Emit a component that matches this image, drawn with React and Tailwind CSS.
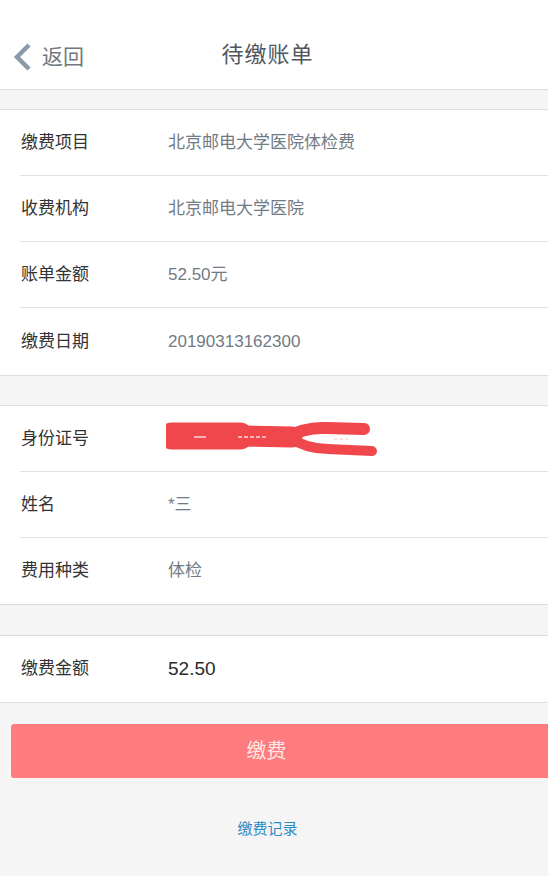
const font = {
  fontFamily: '"Liberation Sans", "Noto Sans CJK SC", sans-serif',
};

const Row = ({ label, children, last, tall }) => (
  <div className="pl-[20px] bg-white">
    <div
      className={`flex items-center ${tall ? "h-[67px]" : "h-[66px]"} ${
        last ? "" : "border-b border-[#e3e3e3]"
      }`}
    >
      <div className="w-[148px] pl-px text-[17px] text-[#333]">{label}</div>
      <div className="flex-1 text-[17px] text-[#717b85]">{children}</div>
    </div>
  </div>
);

const Section = ({ children }) => (
  <div className="bg-white border-y border-[#dedede]">{children}</div>
);

const Redaction = () => (
  <svg width="215" height="36" viewBox="0 0 215 36" className="-ml-[2px]">
    <g stroke="#f0474d" strokeLinecap="round" fill="none">
      <path d="M6 15 L74 15" strokeWidth="27" />
      <path d="M72 15 L126 16" strokeWidth="21" />
      <path d="M120 17 Q138 6 160 7 L198 8" strokeWidth="12" />
      <path d="M120 15 Q140 28 162 28 L206 30" strokeWidth="10" />
    </g>
    <g stroke="#fbd6d7" strokeWidth="1.5">
      <path d="M28 16 L40 16" />
      <path d="M72 16 L100 16" strokeDasharray="4 2" />
      <path d="M168 18 L182 18" strokeDasharray="3 3" />
    </g>
  </svg>
);

export default function App() {
  return (
    <div className="min-h-[876px] bg-[#f5f5f5]" style={font}>
      <div className="relative flex items-center justify-center h-[90px] pt-[20px] pr-[13px] bg-white border-b border-[#dcdcdc]">
        <div className="absolute left-[13px] top-[41px] flex items-center">
          <svg width="20" height="30" viewBox="0 0 20 30">
            <path
              d="M16 3 L4 15 L16 27"
              fill="none"
              stroke="#8b9aa6"
              strokeWidth="4.5"
              strokeLinejoin="miter"
            />
          </svg>
          <span className="ml-[9px] text-[21px] text-[#6f7880]">返回</span>
        </div>
        <h1 className="text-[22px] text-[#50575e] tracking-[1px]">待缴账单</h1>
      </div>

      <div className="h-[19px]" />
      <Section>
        <Row label="缴费项目">北京邮电大学医院体检费</Row>
        <Row label="收费机构">北京邮电大学医院</Row>
        <Row label="账单金额">52.50元</Row>
        <Row label="缴费日期" last tall>
          20190313162300
        </Row>
      </Section>

      <div className="h-[29px]" />
      <Section>
        <Row label="身份证号">
          <Redaction />
        </Row>
        <Row label="姓名">*三</Row>
        <Row label="费用种类" last>
          体检
        </Row>
      </Section>

      <div className="h-[30px]" />
      <Section>
        <div className="pl-[20px] flex items-center h-[66px]">
          <div className="w-[148px] pl-px text-[17px] text-[#333]">缴费金额</div>
          <div className="text-[19px] text-[#2b2b2b]">52.50</div>
        </div>
      </Section>

      <div className="pl-[11px] pt-[21px]">
        <button className="w-full h-[54px] pr-[26px] bg-[#fe7b7f] rounded-l-[3px] text-[20px] text-[#fde7e7]">
          缴费
        </button>
      </div>

      <div className="pt-[40px] pr-[13px] text-center text-[15px] text-[#2c8bc5]">缴费记录</div>
    </div>
  );
}
